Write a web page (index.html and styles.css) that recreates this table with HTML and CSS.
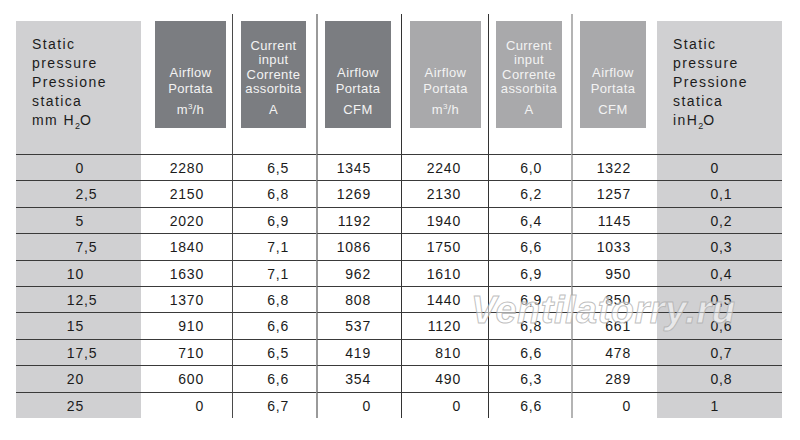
FILE: index.html
```html
<!DOCTYPE html>
<html lang="it">
<head>
<meta charset="utf-8">
<title>Static pressure table</title>
<link rel="stylesheet" href="styles.css">
</head>
<body>
<div class="wrap">
  <div class="grid">
    <div class="hgray">Static<br>pressure<br>Pressione<br>statica<br>mm H<sub>2</sub>O</div>
    <div class="hc c1"><div class="hbox dark w1"><div class="nm af">Airflow<br>Portata</div><div class="un">m<sup>3</sup>/h</div></div></div>
    <div class="hc c2"><div class="hbox dark w2"><div class="nm ci">Current<br>input<br>Corrente<br>assorbita</div><div class="un">A</div></div></div>
    <div class="hc c3"><div class="hbox dark w3"><div class="nm af">Airflow<br>Portata</div><div class="un">CFM</div></div></div>
    <div class="hc c4"><div class="hbox light w4"><div class="nm af">Airflow<br>Portata</div><div class="un">m<sup>3</sup>/h</div></div></div>
    <div class="hc c5"><div class="hbox light w5"><div class="nm ci">Current<br>input<br>Corrente<br>assorbita</div><div class="un">A</div></div></div>
    <div class="hc c6"><div class="hbox light w6"><div class="nm af">Airflow<br>Portata</div><div class="un">CFM</div></div></div>
    <div class="hgray hr">Static<br>pressure<br>Pressione<br>statica<br>inH<sub>2</sub>O</div>

    <div class="b c0"><span class="i">0</span></div><div class="b c1">2280</div><div class="b c2">6,5</div><div class="b c3">1345</div><div class="b c4">2240</div><div class="b c5">6,0</div><div class="b c6">1322</div><div class="b c7"><span class="i">0</span></div>
    <div class="b c0"><span class="i">2</span>,5</div><div class="b c1">2150</div><div class="b c2">6,8</div><div class="b c3">1269</div><div class="b c4">2130</div><div class="b c5">6,2</div><div class="b c6">1257</div><div class="b c7"><span class="i">0</span>,1</div>
    <div class="b c0"><span class="i">5</span></div><div class="b c1">2020</div><div class="b c2">6,9</div><div class="b c3">1192</div><div class="b c4">1940</div><div class="b c5">6,4</div><div class="b c6">1145</div><div class="b c7"><span class="i">0</span>,2</div>
    <div class="b c0"><span class="i">7</span>,5</div><div class="b c1">1840</div><div class="b c2">7,1</div><div class="b c3">1086</div><div class="b c4">1750</div><div class="b c5">6,6</div><div class="b c6">1033</div><div class="b c7"><span class="i">0</span>,3</div>
    <div class="b c0"><span class="i">10</span></div><div class="b c1">1630</div><div class="b c2">7,1</div><div class="b c3">962</div><div class="b c4">1610</div><div class="b c5">6,9</div><div class="b c6">950</div><div class="b c7"><span class="i">0</span>,4</div>
    <div class="b c0"><span class="i">12</span>,5</div><div class="b c1">1370</div><div class="b c2">6,8</div><div class="b c3">808</div><div class="b c4">1440</div><div class="b c5">6,9</div><div class="b c6">850</div><div class="b c7"><span class="i">0</span>,5</div>
    <div class="b c0"><span class="i">15</span></div><div class="b c1">910</div><div class="b c2">6,6</div><div class="b c3">537</div><div class="b c4">1120</div><div class="b c5">6,8</div><div class="b c6">661</div><div class="b c7"><span class="i">0</span>,6</div>
    <div class="b c0"><span class="i">17</span>,5</div><div class="b c1">710</div><div class="b c2">6,5</div><div class="b c3">419</div><div class="b c4">810</div><div class="b c5">6,6</div><div class="b c6">478</div><div class="b c7"><span class="i">0</span>,7</div>
    <div class="b c0"><span class="i">20</span></div><div class="b c1">600</div><div class="b c2">6,6</div><div class="b c3">354</div><div class="b c4">490</div><div class="b c5">6,3</div><div class="b c6">289</div><div class="b c7"><span class="i">0</span>,8</div>
    <div class="b c0"><span class="i">25</span></div><div class="b c1">0</div><div class="b c2">6,7</div><div class="b c3">0</div><div class="b c4">0</div><div class="b c5">6,6</div><div class="b c6">0</div><div class="b c7"><span class="i">1</span></div>
  </div>
  <div class="watermark">Ventilatorry.ru</div>
</div>
</body>
</html>
```

FILE: styles.css
```css
html, body {
  margin: 0;
  padding: 0;
  background: #ffffff;
}
body {
  font-family: "Liberation Sans", Arial, sans-serif;
  color: #1b1b1b;
}
.wrap {
  position: relative;
  margin: 14px 0 0 16px;
  width: 766px;
}
.grid {
  display: grid;
  grid-template-columns: 125px 91px 84px 85px 87px 83px 86px 125px;
  grid-template-rows: 140px repeat(10, 26.4px);
}
.grid > div {
  box-sizing: border-box;
}

/* header gray columns */
.hgray {
  margin-top: 7px;
  background: #d0d0d2;
  padding: 14px 0 0 16px;
  font-size: 14px;
  letter-spacing: 1.4px;
  line-height: 19px;
  color: #1c1c1c;
}
.hgray sub {
  font-size: 9px;
  line-height: 0;
  vertical-align: -4px;
  letter-spacing: 0;
}

/* header boxes */
.hc {
  padding-top: 7px;
}
.hbox {
  height: 107px;
  box-sizing: border-box;
  display: flex;
  flex-direction: column;
  justify-content: flex-end;
  align-items: center;
  text-align: center;
  padding-bottom: 8px;
  font-size: 13px;
  letter-spacing: 0.4px;
}
.hbox.dark {
  background: #7b7d81;
  color: #f3f3f3;
}
.hbox.light {
  background: #a9a9ab;
  color: #f3f3f3;
}
.nm.af {
  line-height: 16.4px;
  margin-bottom: 2.6px;
}
.nm.ci {
  line-height: 14.2px;
  margin-bottom: 4.1px;
}
.un {
  line-height: 20px;
}
.un sup {
  font-size: 8px;
  line-height: 0;
  vertical-align: 5px;
  letter-spacing: 0;
}
.w1 { margin-left: 14px; width: 71px; }
.w2 { margin-left: 8px; width: 65px; }
.w3 { margin-left: 7px; width: 66px; }
.w4 { margin-left: 8px; width: 71px; }
.w5 { margin-left: 7px; width: 66px; }
.w6 { margin-left: 7px; width: 66px; }

/* vertical rules */
.c2 { border-left: 1px solid #4a4a4a; }
.c3 { border-left: 2px solid #9a9a9a; }
.c4 { border-left: 1px solid #333333; }
.c5 { border-left: 1px solid #333333; }
.c6 { border-left: 2px solid #b4b4b4; }

/* body cells */
.b {
  border-top: 1px solid #3a3a3a;
  font-size: 14px;
  letter-spacing: 0.8px;
  line-height: 23px;
  padding-top: 2px;
  white-space: nowrap;
  color: #1b1b1b;
}
.b.c0, .b.c7 {
  background: #d0d0d2;
}
.b.c0 { padding-left: 50px; }
.b.c7 { padding-left: 44px; }
.b .i {
  display: inline-block;
  width: 18px;
  text-align: right;
}
.b.c1 { text-align: right; padding-right: 28px; }
.b.c2 { text-align: right; padding-right: 27px; }
.b.c3 { text-align: right; padding-right: 30px; }
.b.c4 { text-align: right; padding-right: 27px; }
.b.c5 { text-align: right; padding-right: 29px; }
.b.c6 { text-align: right; padding-right: 26px; }

/* watermark overlay */
.watermark {
  position: absolute;
  left: 455px;
  top: 277px;
  font-size: 38px;
  line-height: 38px;
  font-weight: bold;
  font-style: italic;
  letter-spacing: 0.5px;
  color: rgba(255, 255, 255, 0.55);
  -webkit-text-stroke: 1px rgba(170, 170, 170, 0.75);
  white-space: nowrap;
  pointer-events: none;
}
```
